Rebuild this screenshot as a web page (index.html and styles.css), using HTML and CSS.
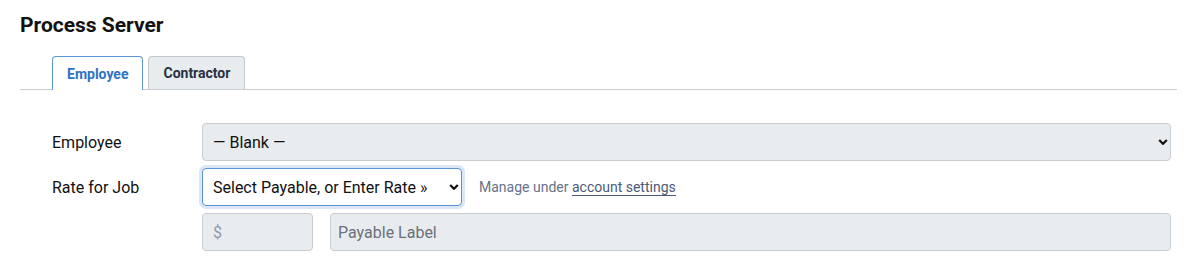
FILE: index.html
```html
<!DOCTYPE html>
<html lang="en">
<head>
    <meta charset="UTF-8">
    <meta name="viewport" content="width=device-width, initial-scale=1.0">
    <title>Process Server</title>
    <link rel="stylesheet" href="styles.css">
</head>
<body>
    <div class="panel">
        <h2>Process Server</h2>

        <div class="tabs">
            <button class="tab active">Employee</button>
            <button class="tab">Contractor</button>
        </div>

        <form class="pay-form">
            <div class="form-row">
                <label for="employee">Employee</label>
                <div class="select-wrap full">
                    <select id="employee" class="control">
                        <option>— Blank —</option>
                    </select>
                    <svg class="chevron" viewBox="0 0 10 6" width="10" height="6"><path d="M1.2 1l3.8 3.8 3.8-3.8" fill="none" stroke="#111" stroke-width="2.2"/></svg>
                </div>
            </div>

            <div class="form-row">
                <label for="rate">Rate for Job</label>
                <div class="select-wrap rate">
                    <select id="rate" class="control focused">
                        <option>Select Payable, or Enter Rate »</option>
                    </select>
                    <svg class="chevron" viewBox="0 0 10 6" width="10" height="6"><path d="M1.2 1l3.8 3.8 3.8-3.8" fill="none" stroke="#111" stroke-width="2.2"/></svg>
                </div>
                <span class="hint">Manage under <a href="#">account settings</a></span>
            </div>

            <div class="form-row">
                <span class="spacer"></span>
                <input type="text" class="control amount" placeholder="$">
                <input type="text" class="control label-input" placeholder="Payable Label">
            </div>
        </form>
    </div>
</body>
</html>
```

FILE: styles.css
```css
* {
    box-sizing: border-box;
    margin: 0;
    padding: 0;
}

body {
    font-family: Roboto, 'Liberation Sans', sans-serif;
    background-color: white;
    color: #111;
}

.panel {
    padding: 13px 20px 0 20px;
}

h2 {
    font-size: 21px;
    font-weight: bold;
    line-height: 24px;
    color: #111;
}

.tabs {
    display: flex;
    gap: 5px;
    margin-top: 19px;
    padding-left: 32px;
    border-bottom: 1px solid #c9ccd1;
}

.tab {
    font-family: inherit;
    font-size: 14px;
    font-weight: bold;
    color: #2a3142;
    background-color: #e9ecef;
    border: 1px solid #c4c8ce;
    border-bottom: none;
    border-radius: 4px 4px 0 0;
    height: 33px;
    padding: 0 14px;
    margin-bottom: -1px;
}

.tab.active {
    background-color: white;
    color: #2f72c4;
    border-color: #5b95d8;
    height: 34px;
}

.pay-form {
    padding: 33px 0 0 32px;
    display: flex;
    flex-direction: column;
    gap: 7px;
}

.form-row {
    display: flex;
    align-items: center;
}

.form-row label,
.spacer {
    width: 150px;
    flex-shrink: 0;
    font-size: 16px;
}

.select-wrap {
    position: relative;
}

.select-wrap.full {
    width: 969px;
}

.select-wrap.rate {
    width: 260px;
}

.control {
    font-family: inherit;
    font-size: 16px;
    color: #111;
    height: 38px;
    width: 100%;
    padding: 0 10px;
    border: 1px solid #c9ccd1;
    border-radius: 4px;
    background-color: #e9ecef;
    appearance: none;
    outline: none;
}

.control.focused {
    background-color: white;
    border-color: #5b95d8;
    box-shadow: 0 0 0 3px #dbe7f6;
}

.chevron {
    position: absolute;
    right: 3px;
    top: 16px;
}

.hint {
    margin-left: 17px;
    font-size: 14px;
    color: #66728a;
}

.hint a {
    color: #4a5a78;
    text-decoration: none;
    border-bottom: 1px solid #4a5a78;
}

.amount {
    width: 111px;
}

.amount::placeholder {
    color: #8b98ad;
}

.label-input {
    width: 841px;
    margin-left: 17px;
    padding-left: 7px;
}

.label-input::placeholder {
    color: #6b717a;
}
```
